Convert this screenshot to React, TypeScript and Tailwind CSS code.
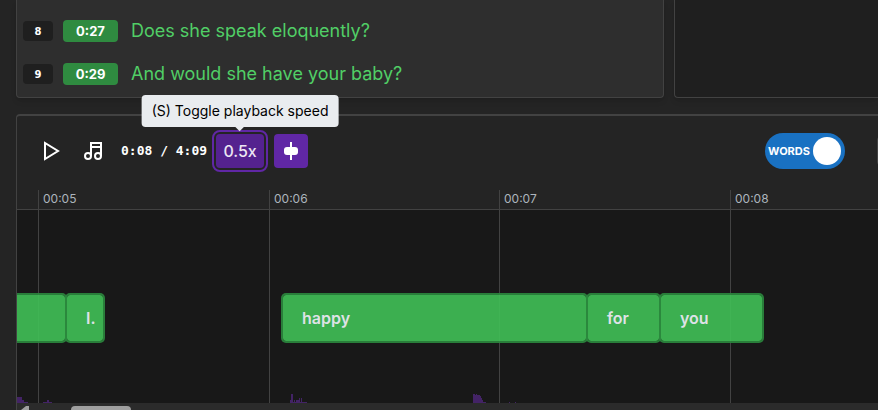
const PX_PER_SECOND = 230.5;
const VIEW_START = 4.908;

const xAt = (seconds: number) => Math.round((seconds - VIEW_START) * PX_PER_SECOND);

const lines = [
  { index: 8, time: "0:27", text: "Does she speak eloquently?" },
  { index: 9, time: "0:29", text: "And would she have your baby?" },
];

const ticks = [
  { at: 5, label: "00:05" },
  { at: 6, label: "00:06" },
  { at: 7, label: "00:07" },
  { at: 8, label: "00:08" },
];

const words = [
  { text: "", start: 4.8, end: 5.125 },
  { text: "I.", start: 5.117, end: 5.291 },
  { text: "happy", start: 6.054, end: 7.386 },
  { text: "for", start: 7.378, end: 7.703 },
  { text: "you", start: 7.695, end: 8.15 },
];

function LyricRow({ index, time, text }: { index: number; time: string; text: string }) {
  return (
    <li className="flex h-[42px] items-center">
      <span className="flex h-5 w-[30px] items-center justify-center rounded bg-[#1f1f1f] font-['DejaVu_Sans',sans-serif] text-[10px] font-bold text-white">
        {index}
      </span>
      <button className="ml-[10px] h-[22px] w-[55px] rounded bg-[#2f8b40] text-[13px] leading-none font-bold text-white">
        {time}
      </button>
      <span className="ml-[13px] text-lg text-[#51cf66]">{text}</span>
    </li>
  );
}

function Toolbar() {
  return (
    <div className="flex h-[74px] items-center pb-1 pl-[22px]">
      <button aria-label="Play" className="flex size-6 items-center justify-center text-white">
        <svg width="24" height="24" viewBox="0 0 24 24" fill="none" stroke="currentColor" strokeWidth="2">
          <path d="M6 4v16l13-8z" />
        </svg>
      </button>
      <button aria-label="Music" className="ml-[18px] flex size-6 items-center justify-center text-white">
        <svg width="24" height="24" viewBox="0 0 24 24" fill="none" stroke="currentColor" strokeWidth="2">
          <circle cx="7" cy="17" r="3" />
          <circle cx="17" cy="17" r="3" />
          <path d="M10 17V4h10v13M10 8h10" />
        </svg>
      </button>
      <span className="ml-4 font-['DejaVu_Sans_Mono',monospace] text-[13px] font-bold whitespace-pre text-white">
        0:08 / 4:09
      </span>
      <div className="relative ml-[9px]">
        <button className="block h-[34px] w-12 rounded bg-[#54228f] text-base font-medium text-[#ece6f3] outline-2 outline-offset-2 outline-[#6027a5]">
          0.5x
        </button>
        <div
          role="tooltip"
          className="absolute bottom-[41px] left-1/2 -translate-x-1/2 rounded bg-[#e9ecef] px-[10px] py-[5px] text-sm leading-[22px] whitespace-nowrap text-black"
        >
          (S) Toggle playback speed
          <span className="absolute -bottom-[3px] left-1/2 size-[6px] -translate-x-1/2 rotate-45 bg-[#e9ecef]" />
        </div>
      </div>
      <button aria-label="Center" className="ml-[10px] flex size-[34px] items-center justify-center rounded bg-[#6027a5] text-white">
        <svg width="18" height="18" viewBox="0 0 18 18" fill="currentColor">
          <rect x="2" y="5" width="14" height="8" rx="3" />
          <rect x="8" y="0" width="2" height="18" />
        </svg>
      </button>
      <label className="mr-8 ml-auto flex h-9 w-20 cursor-pointer items-center justify-between rounded-full bg-[#1971c2] pr-1 pl-[3px] text-[11px] font-bold text-white">
        <input type="checkbox" role="switch" defaultChecked className="sr-only" />
        WORDS
        <span className="size-7 rounded-full bg-white" />
      </label>
      <button aria-label="More" className="-mr-[33px] h-[30px] w-[34px] rounded border border-[#424242] bg-[#2e2e2e]" />
    </div>
  );
}

function Waveform() {
  return (
    <svg className="absolute bottom-0 left-0 h-[10px] w-[600px]" viewBox="0 0 600 10" fill="#432366">
      <path d="M0 10V4h5v3h2v2h4v1zM26 10V9h4V7h2v2h3v1zM273 10V7h1V1h2v8h1V7h1v2h1V7h3V5h1v4h1V5h1v4h5v1zM456 10V1h2v1h1V1h1v1h3v1h1v2h1v2h1v2h3v1zM492 10V9h1v1zM498 10V9h1v1z" />
    </svg>
  );
}

function Timeline() {
  return (
    <div className="relative overflow-hidden">
      <div className="h-5 border-b border-[#424242]" />
      <div className="h-[193px] bg-[#181818]" />
      {ticks.map((tick) => (
        <div
          key={tick.label}
          className="absolute inset-y-0 border-l border-[#424242] pl-1 text-xs leading-[18px] text-[#adb5bd]"
          style={{ left: xAt(tick.at) }}
        >
          {tick.label}
        </div>
      ))}
      {words.map((word) => (
        <div
          key={word.start}
          className="absolute top-[103px] flex h-[50px] items-center rounded-[5px] border-2 border-[#2b8a3e]/90 bg-[#40c057]/90 bg-clip-padding pl-[19px] text-base font-semibold text-[#dee2e6]"
          style={{ left: xAt(word.start), width: xAt(word.end) - xAt(word.start) }}
        >
          {word.text}
        </div>
      ))}
      <Waveform />
    </div>
  );
}

export default function App() {
  return (
    <div className="overflow-hidden bg-[#242424] pl-4 font-[Inter,sans-serif]">
      <main className="flex flex-col gap-4">
        <div className="flex gap-[10px]">
          <ul className="w-[648px] shrink-0 space-y-px rounded-b border border-t-0 border-[#424242] bg-[#2e2e2e] pt-[10px] pb-[2px] pl-[6px] shadow-md">
            {lines.map((line) => (
              <LyricRow key={line.index} {...line} />
            ))}
          </ul>
          <div className="grow rounded-bl border-b border-l border-[#424242] bg-[#1f1f1f] shadow-md" />
        </div>
        <section className="rounded-tl border-t-2 border-l border-[#424242]">
          <Toolbar />
          <Timeline />
          <div className="flex h-[7px] items-end bg-[#2b2b2b]">
            <svg className="ml-1" width="8" height="4" viewBox="0 0 8 4" fill="#9f9f9f">
              <path d="M0 4l5-4h3v4z" />
            </svg>
            <div className="ml-[42px] h-1 w-[60px] rounded-t bg-[#9f9f9f]" />
          </div>
        </section>
      </main>
    </div>
  );
}
